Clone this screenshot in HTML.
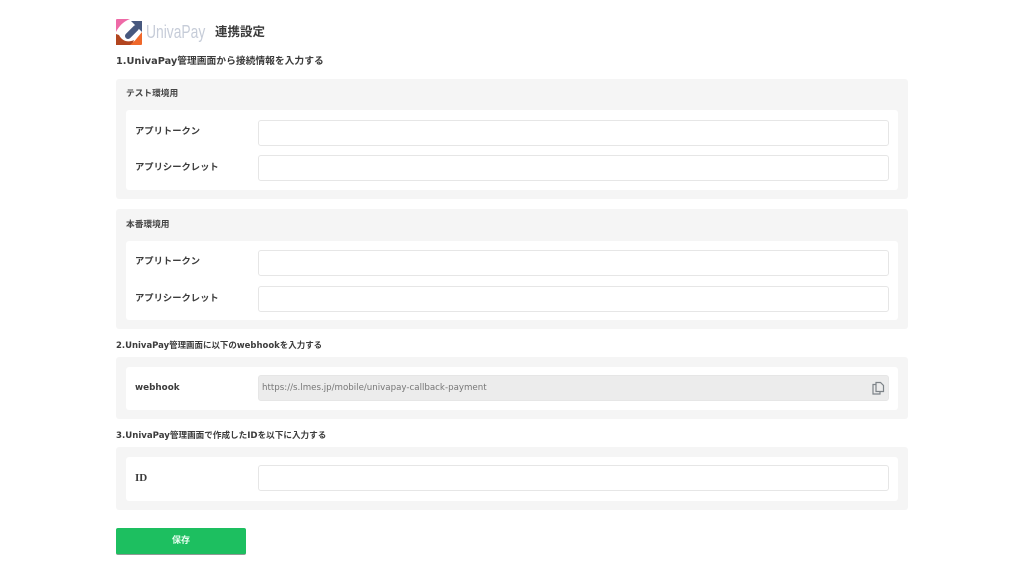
<!DOCTYPE html>
<html lang="ja"><head><meta charset="utf-8"><title>連携設定</title>
<style>
html,body{margin:0;padding:0;background:#fff;}
body{width:1024px;height:576px;overflow:hidden;position:relative;font-family:"DejaVu Sans","Noto Sans CJK JP",sans-serif;color:#3a3a3a;filter:blur(.3px);}
.a{position:absolute;white-space:nowrap;}
.panel{position:absolute;left:116px;width:792px;background:#f5f5f5;border-radius:3px;}
.inner{position:absolute;left:126px;width:772px;background:#fff;border-radius:3px;}
.inp{position:absolute;left:258px;width:629px;height:24px;background:#fff;border:1px solid #e6e6e6;border-radius:3px;}
.h{font-weight:700;line-height:14px;left:116px;color:#3c3c3c;}
.sub{font-size:8.7px;font-weight:700;line-height:12px;left:126px;color:#444;}
.l{font-size:9.3px;font-weight:700;line-height:14px;left:135px;color:#3c3c3c;}
</style></head><body>
<svg class="a" style="left:116px;top:19px" width="26" height="26" viewBox="0 0 26 26">
<rect width="26" height="26" rx="1" fill="#ffffff"/>
<path d="M0 1Q0 0 1 0H14C8 2 3 7 0 13Z" fill="#ee6aa7"/>
<path d="M0 15V26H16L18 21C12 24 6 22 3 16Z" fill="#b2451f"/>
<path d="M26 13V25Q26 26 25 26H14L19 21.500Z" fill="#f0682a"/>
<path d="M12 17L20 9" stroke="#48597f" stroke-width="6" stroke-linecap="round" fill="none"/>
<path d="M15 2H26V13L21.500 8.500L18.500 5.500Z" fill="#48597f"/>
</svg>
<div class="a" style="left:146px;top:19px;font-family:'Liberation Sans',sans-serif;font-size:18px;line-height:26px;color:#c6ccd8;transform:scaleX(.77);transform-origin:0 0;">UnivaPay</div>
<div class="a" style="left:215px;top:24px;font-size:12.5px;font-weight:700;line-height:16px;color:#3a3a3a;">連携設定</div>

<div class="a h" style="top:55px;font-size:9.77px;">1.UnivaPay管理画面から接続情報を入力する</div>

<div class="panel" style="top:79px;height:120px;"></div>
<div class="a sub" style="top:88px;">テスト環境用</div>
<div class="inner" style="top:110px;height:80px;"></div>
<div class="a l" style="top:125px;">アプリトークン</div>
<div class="inp" style="top:120px;"></div>
<div class="a l" style="top:161px;">アプリシークレット</div>
<div class="inp" style="top:155px;"></div>

<div class="panel" style="top:209px;height:120px;"></div>
<div class="a sub" style="top:219px;">本番環境用</div>
<div class="inner" style="top:241px;height:79px;"></div>
<div class="a l" style="top:255px;">アプリトークン</div>
<div class="inp" style="top:250px;"></div>
<div class="a l" style="top:292px;">アプリシークレット</div>
<div class="inp" style="top:286px;"></div>

<div class="a h" style="top:338px;font-size:8.47px;">2.UnivaPay管理画面に以下のwebhookを入力する</div>
<div class="panel" style="top:357px;height:62px;"></div>
<div class="inner" style="top:367px;height:43px;"></div>
<div class="a l" style="top:381px;font-size:8.8px;">webhook</div>
<div class="inp" style="top:375px;background:#ececec;"></div>
<div class="a" style="left:262px;top:381px;font-size:8.67px;line-height:14px;color:#777;">https://s.lmes.jp/mobile/univapay-callback-payment</div>
<svg class="a" style="left:871px;top:381px" width="14" height="14" viewBox="0 0 14 14" fill="none" stroke="#7d8388" stroke-width="1.2">
<path d="M5 1.500H9.500L12.500 4.500V10.500H5Z"/>
<path d="M5 3.500H2V13H9V10.500"/>
</svg>

<div class="a h" style="top:429px;font-size:8.6px;">3.UnivaPay管理画面で作成したIDを以下に入力する</div>
<div class="panel" style="top:447px;height:63px;"></div>
<div class="inner" style="top:457px;height:44px;"></div>
<div class="a l" style="top:471px;font-family:'Liberation Serif','Noto Sans CJK JP',serif;font-size:11px;">ID</div>
<div class="inp" style="top:465px;"></div>

<div class="a" style="left:116px;top:528px;width:130px;height:26px;background:#1dbf60;border-radius:2px;border-bottom:1px solid #8f9a94;"></div>
<div class="a" style="left:116px;top:535px;width:130px;text-align:center;font-size:9px;font-weight:700;line-height:13px;color:#eafff2;">保存</div>
</body></html>
